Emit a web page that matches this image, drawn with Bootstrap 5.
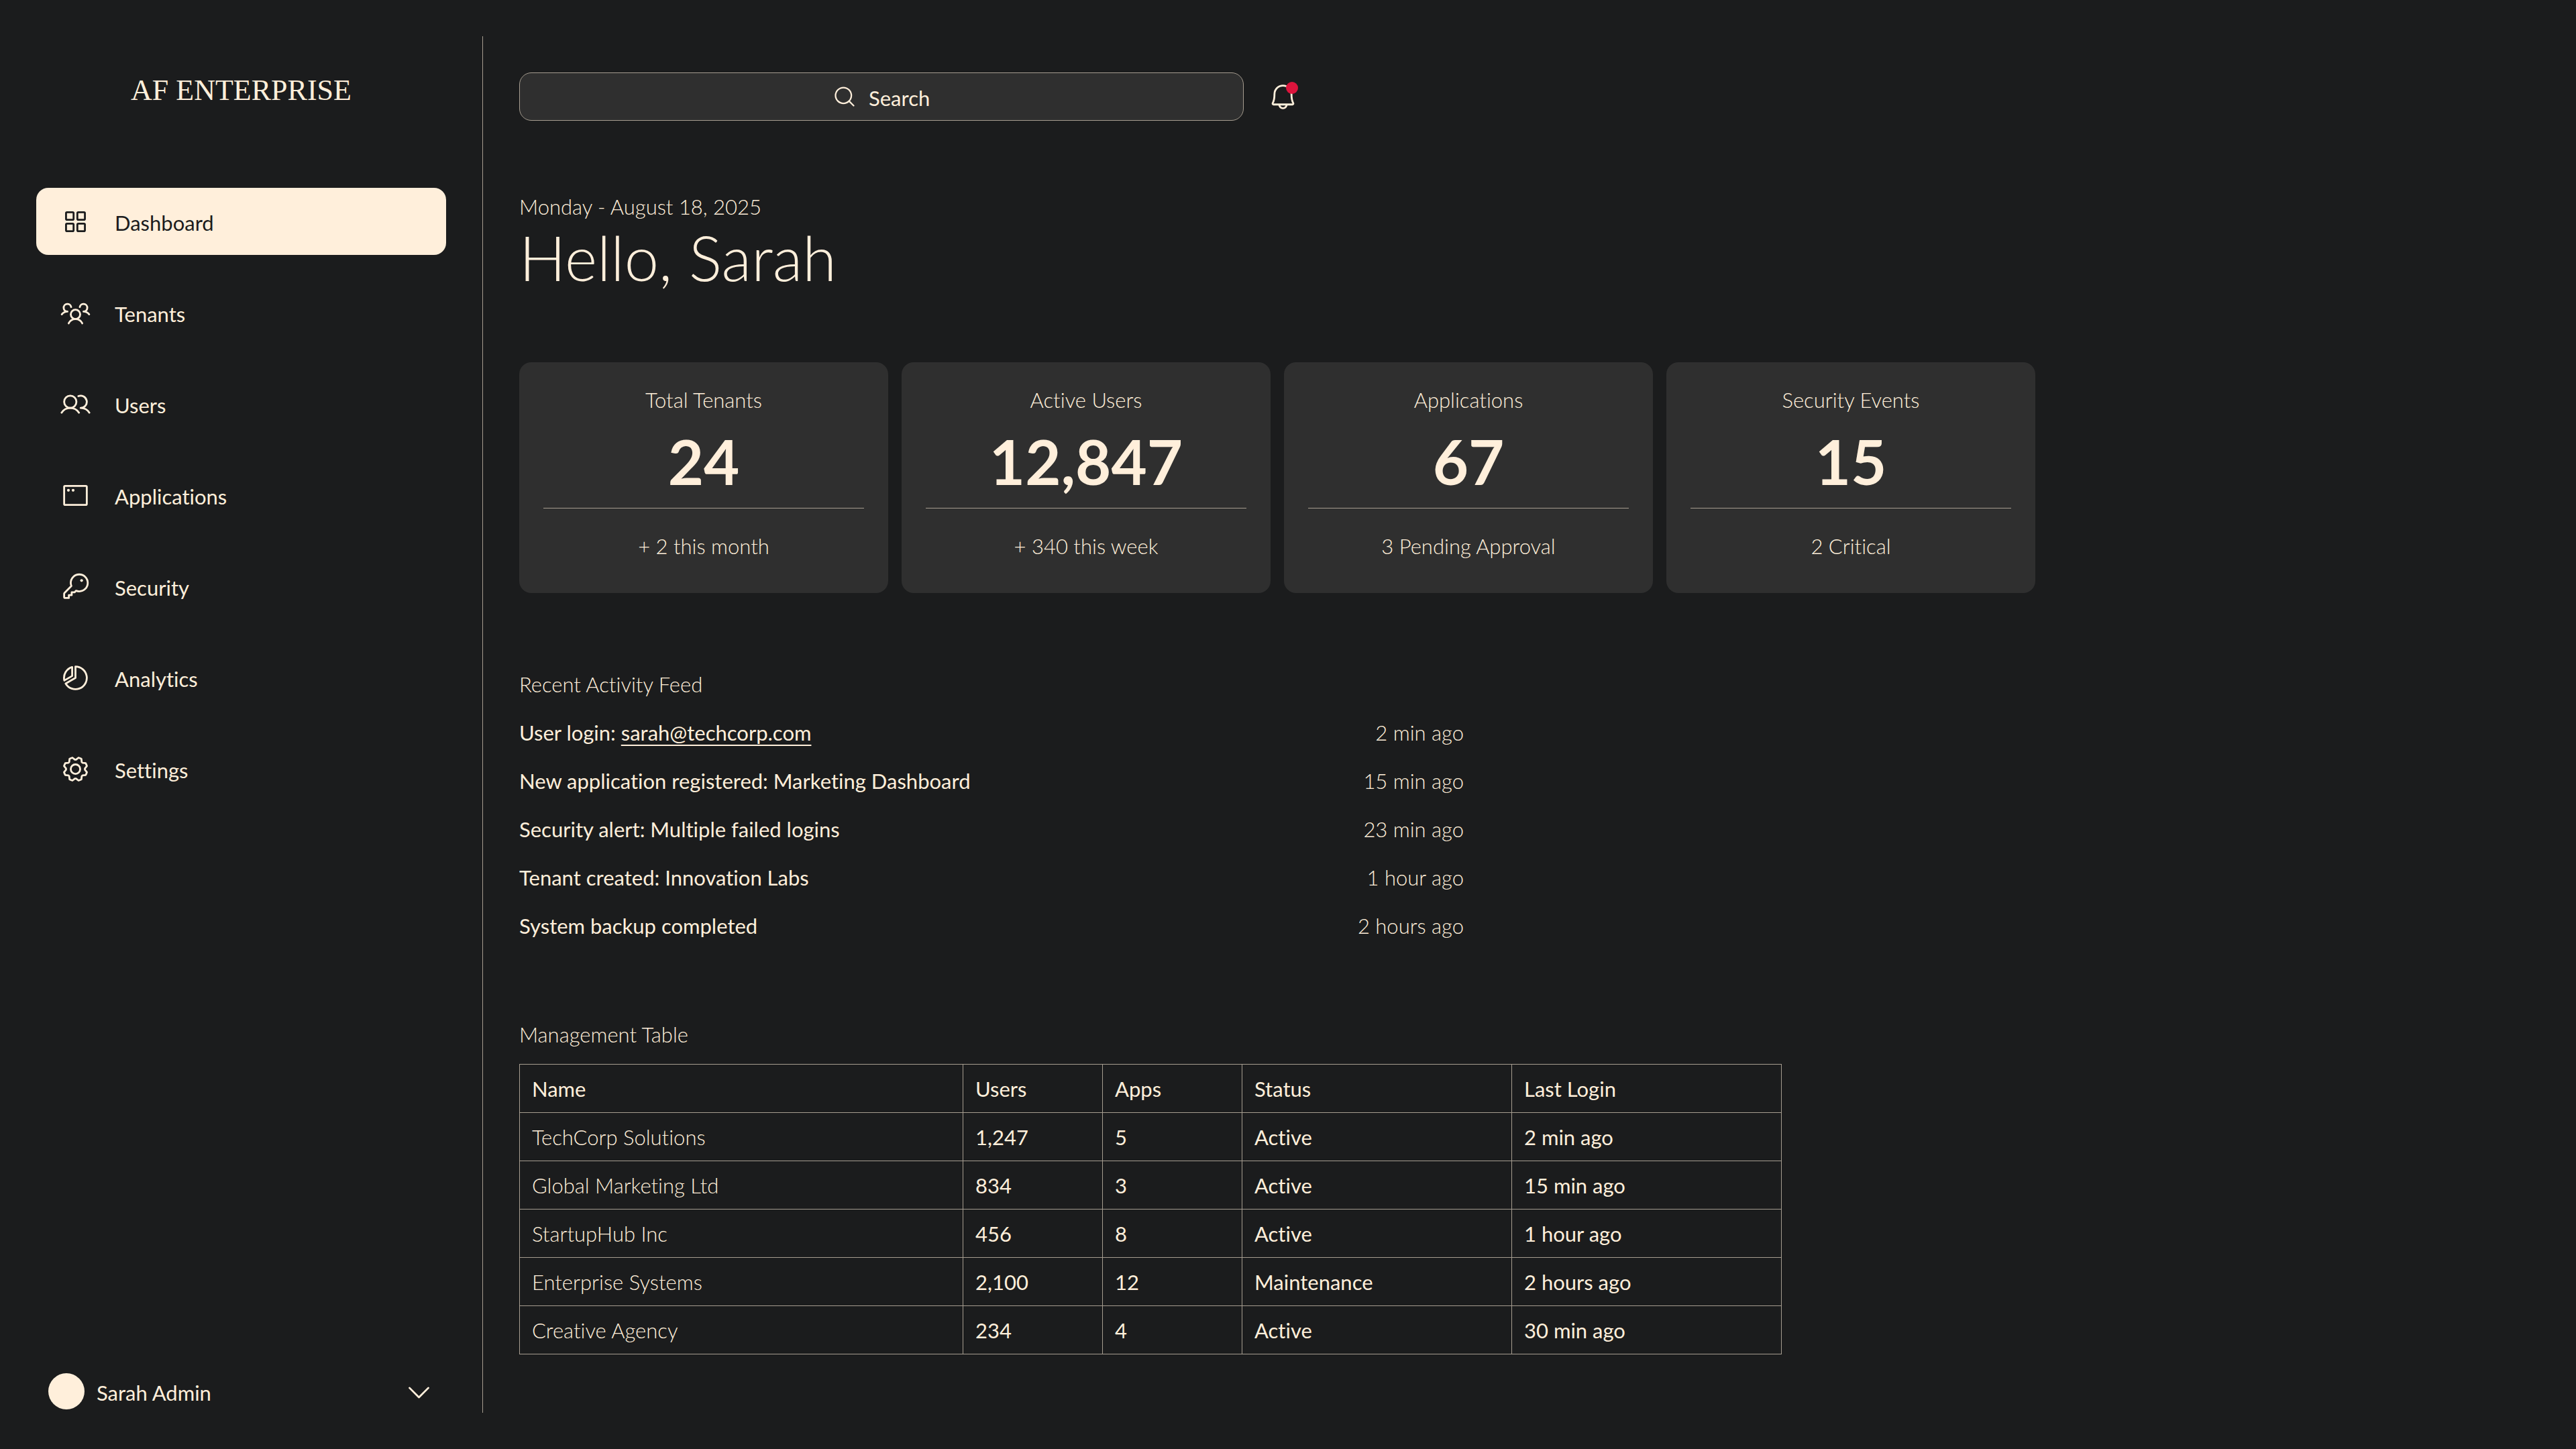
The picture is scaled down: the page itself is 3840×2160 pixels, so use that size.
<!DOCTYPE html>
<html lang="en">
<head>
<meta charset="utf-8">
<meta name="viewport" content="width=device-width, initial-scale=1">
<title>AF Enterprise – Dashboard</title>
<link href="https://cdn.jsdelivr.net/npm/bootstrap@5.3.0/dist/css/bootstrap.min.css" rel="stylesheet">
<style>
:root{--cream:#ffefdb;--ink:#1b1c1d;--panel:#2f2f2f;--rule:#a69d90}
body{background:var(--ink);color:var(--cream);font-family:Lato,"Open Sans",sans-serif;font-size:31px;line-height:36px;font-variant-ligatures:none}
.thin{font-weight:300}
svg.ico{width:45px;height:45px;flex:none;fill:none;stroke:currentColor;stroke-width:16;stroke-linecap:round;stroke-linejoin:round}
svg.ico .dot{fill:currentColor;stroke:none}
/* Sidebar */
.side{width:720px;padding:54px 0}
.side-inner{border-right:1px solid var(--rule);padding:54px 54px 5px}
.brand{font-family:"Liberation Serif",serif;font-size:44px;line-height:54px;color:var(--cream);margin-bottom:118px}
.side-nav{gap:36px}
.side-nav .nav-link{height:100px;padding:0 36px;gap:36px;border-radius:18px;color:var(--cream)}
.side-nav .nav-link.active{background:var(--cream);color:var(--ink)}
.side-label{padding-top:3px}
.profile{color:var(--cream);background:none;border:0;padding:0 18px;gap:18px}
.avatar{width:54px;height:54px;background:var(--cream)}
/* Main */
.content{padding:108px 54px}
.topbar{gap:36px}
.search{flex:0 1 1080px;height:72px;gap:18px;background:var(--panel);border:1px solid var(--rule);border-radius:18px}
.search svg.ico{width:36px;height:36px}
.search input{width:92px;color:var(--cream);background:none;border:0;outline:0;padding:3px 0 0}
.search input::placeholder{color:var(--cream);opacity:1}
.bell{background:none;border:0;padding:0;color:var(--cream);line-height:0}
.alert-dot{width:18px;height:18px;background:#dc143c}
.greeting{margin-top:110px}
.greeting h1{font-size:92px;line-height:116px;font-weight:300}
.stats{max-width:2260px;gap:20px;margin-top:98px}
.stat{flex:1 1 0;background:var(--panel);border-radius:18px;padding:38px 36px 52px}
.stat-value{font-size:92px;line-height:116px;font-weight:700;margin-top:16px}
.stat-rule{height:1px;background:var(--rule);margin:11px 0 38px}
.section-title{font-size:31px;line-height:72px;font-weight:300}
.feed{max-width:1408px;margin-top:100px}
.feed li{line-height:72px}
.feed a{color:inherit;text-decoration-thickness:2px;text-underline-offset:6px}
.tenants{max-width:1882px;margin-top:90px}
.tenants table{--bs-table-bg:transparent;--bs-table-color:var(--cream);color:var(--cream);border-color:var(--rule);margin-top:8px;table-layout:fixed}
.tenants th,.tenants td{height:72px;padding:0 18px;border-color:var(--rule);font-weight:400;vertical-align:middle}
.tenants tbody th{font-weight:300}
.w-name{width:661px}.w-num{width:208px}
</style>
<script src="https://cdn.jsdelivr.net/npm/bootstrap@5.3.0/dist/js/bootstrap.bundle.min.js"></script>
</head>
<body>
<div class="d-flex min-vh-100">
  <aside class="side d-flex flex-shrink-0">
    <div class="side-inner d-flex flex-column flex-grow-1">
      <a class="brand text-center text-decoration-none" href="#">AF ENTERPRISE</a>
      <nav class="side-nav nav flex-column" aria-label="Main">
        <a class="nav-link active d-flex align-items-center" aria-current="page" href="#">
          <svg class="ico" viewBox="0 0 256 256" aria-hidden="true"><rect x="48" y="48" width="64" height="64" rx="8"/><rect x="144" y="48" width="64" height="64" rx="8"/><rect x="48" y="144" width="64" height="64" rx="8"/><rect x="144" y="144" width="64" height="64" rx="8"/></svg>
          <span class="side-label">Dashboard</span></a>
        <a class="nav-link d-flex align-items-center" href="#">
          <svg class="ico" viewBox="0 0 256 256" aria-hidden="true"><circle cx="128" cy="140" r="40"/><path d="M196,116a59.8,59.8,0,0,1,48,24M12,140a59.8,59.8,0,0,1,48-24M70.4,216a64.1,64.1,0,0,1,115.2,0M60,116A32,32,0,1,1,91.4,78M164.6,78A32,32,0,1,1,196,116"/></svg>
          <span class="side-label">Tenants</span></a>
        <a class="nav-link d-flex align-items-center" href="#">
          <svg class="ico" viewBox="0 0 256 256" aria-hidden="true"><circle cx="84" cy="108" r="52"/><path d="M10.2,200a88,88,0,0,1,147.6,0M172,160a87.9,87.9,0,0,1,73.8,40M152.7,59.7A52,52,0,1,1,172,160"/></svg>
          <span class="side-label">Users</span></a>
        <a class="nav-link d-flex align-items-center" href="#">
          <svg class="ico" viewBox="0 0 256 256" aria-hidden="true"><rect x="32" y="48" width="192" height="160" rx="8"/><circle class="dot" cx="68" cy="84" r="12"/><circle class="dot" cx="108" cy="84" r="12"/></svg>
          <span class="side-label">Applications</span></a>
        <a class="nav-link d-flex align-items-center" href="#">
          <svg class="ico" viewBox="0 0 256 256" aria-hidden="true"><path d="M93.2,122.8A70.3,70.3,0,0,1,88,96a72,72,0,1,1,72,72,70.3,70.3,0,0,1-26.8-5.2L120,176H96v24H72v24H40a8,8,0,0,1-8-8V187.3a8,8,0,0,1,2.3-5.6Z"/><circle class="dot" cx="180" cy="76" r="12"/></svg>
          <span class="side-label">Security</span></a>
        <a class="nav-link d-flex align-items-center" href="#">
          <svg class="ico" viewBox="0 0 256 256" aria-hidden="true"><path d="M128,128V32A96,96,0,1,1,44.9,176ZM100,36.2V111.8L33.5,150.2A96,96,0,0,1,100,36.2Z"/></svg>
          <span class="side-label">Analytics</span></a>
        <a class="nav-link d-flex align-items-center" href="#">
          <svg class="ico" viewBox="0 0 256 256" aria-hidden="true"><circle cx="128" cy="128" r="40"/><path d="M41.43,178.09A99.14,99.14,0,0,1,31.36,153.8l16.78-21a81.59,81.59,0,0,1,0-9.64l-16.77-21a99.43,99.43,0,0,1,10.05-24.3l26.71-3a81,81,0,0,1,6.81-6.81l3-26.7A99.14,99.14,0,0,1,102.2,31.36l21,16.78a81.59,81.59,0,0,1,9.64,0l21-16.77a99.43,99.43,0,0,1,24.3,10.05l3,26.71a81,81,0,0,1,6.81,6.81l26.7,3a99.14,99.14,0,0,1,10.07,24.29l-16.78,21a81.59,81.59,0,0,1,0,9.64l16.77,21a99.43,99.43,0,0,1-10,24.3l-26.71,3a81,81,0,0,1-6.81,6.81l-3,26.7a99.14,99.14,0,0,1-24.29,10.07l-21-16.78a81.59,81.59,0,0,1-9.64,0l-21,16.77a99.43,99.43,0,0,1-24.3-10l-3-26.71a81,81,0,0,1-6.81-6.81Z"/></svg>
          <span class="side-label">Settings</span></a>
      </nav>
      <button class="profile d-flex align-items-center mt-auto" type="button">
        <span class="avatar rounded-circle"></span>
        <span class="side-label">Sarah Admin</span>
        <svg class="ico ms-auto" viewBox="0 0 256 256" aria-hidden="true"><path d="M208,96l-80,80L48,96"/></svg>
      </button>
    </div>
  </aside>

  <main class="content flex-grow-1">
    <div class="topbar d-flex align-items-center">
      <label class="search d-flex align-items-center justify-content-center">
        <svg class="ico" viewBox="0 0 256 256" aria-hidden="true"><circle cx="116" cy="116" r="84"/><path d="M175.4,175.4L224,224"/></svg>
        <input type="text" placeholder="Search" aria-label="Search">
      </label>
      <button class="bell position-relative" type="button" aria-label="Notifications">
        <svg class="ico" viewBox="0 0 256 256" aria-hidden="true"><path d="M96,192a32,32,0,0,0,64,0M56,104a72,72,0,0,1,144,0c0,35.82,8.3,64.6,14.9,76A8,8,0,0,1,208,192H48a8,8,0,0,1-6.88-12C47.71,168.6,56,139.81,56,104Z"/></svg>
        <span class="alert-dot position-absolute top-0 end-0 rounded-circle"></span>
      </button>
    </div>

    <header class="greeting">
      <div class="thin">Monday - August 18, 2025</div>
      <h1 class="mb-0">Hello, Sarah</h1>
    </header>

    <section class="stats d-flex text-center" aria-label="Statistics">
      <div class="stat"><div class="thin">Total Tenants</div><div class="stat-value">24</div><div class="stat-rule"></div><div class="thin">+ 2 this month</div></div>
      <div class="stat"><div class="thin">Active Users</div><div class="stat-value">12,847</div><div class="stat-rule"></div><div class="thin">+ 340 this week</div></div>
      <div class="stat"><div class="thin">Applications</div><div class="stat-value">67</div><div class="stat-rule"></div><div class="thin">3 Pending Approval</div></div>
      <div class="stat"><div class="thin">Security Events</div><div class="stat-value">15</div><div class="stat-rule"></div><div class="thin">2 Critical</div></div>
    </section>

    <section class="feed">
      <h2 class="section-title mb-0">Recent Activity Feed</h2>
      <ul class="list-unstyled mb-0">
        <li class="d-flex justify-content-between"><span>User login: <a href="mailto:sarah@techcorp.com">sarah@techcorp.com</a></span><span class="thin">2 min ago</span></li>
        <li class="d-flex justify-content-between"><span>New application registered: Marketing Dashboard</span><span class="thin">15 min ago</span></li>
        <li class="d-flex justify-content-between"><span>Security alert: Multiple failed logins</span><span class="thin">23 min ago</span></li>
        <li class="d-flex justify-content-between"><span>Tenant created: Innovation Labs</span><span class="thin">1 hour ago</span></li>
        <li class="d-flex justify-content-between"><span>System backup completed</span><span class="thin">2 hours ago</span></li>
      </ul>
    </section>

    <section class="tenants">
      <h2 class="section-title mb-0">Management Table</h2>
      <table class="table table-bordered align-middle mb-0">
        <thead><tr><th scope="col" class="w-name">Name</th><th scope="col" class="w-num">Users</th><th scope="col" class="w-num">Apps</th><th scope="col">Status</th><th scope="col">Last Login</th></tr></thead>
        <tbody>
          <tr><th scope="row">TechCorp Solutions</th><td>1,247</td><td>5</td><td>Active</td><td>2 min ago</td></tr>
          <tr><th scope="row">Global Marketing Ltd</th><td>834</td><td>3</td><td>Active</td><td>15 min ago</td></tr>
          <tr><th scope="row">StartupHub Inc</th><td>456</td><td>8</td><td>Active</td><td>1 hour ago</td></tr>
          <tr><th scope="row">Enterprise Systems</th><td>2,100</td><td>12</td><td>Maintenance</td><td>2 hours ago</td></tr>
          <tr><th scope="row">Creative Agency</th><td>234</td><td>4</td><td>Active</td><td>30 min ago</td></tr>
        </tbody>
      </table>
    </section>
  </main>
</div>
</body>
</html>
